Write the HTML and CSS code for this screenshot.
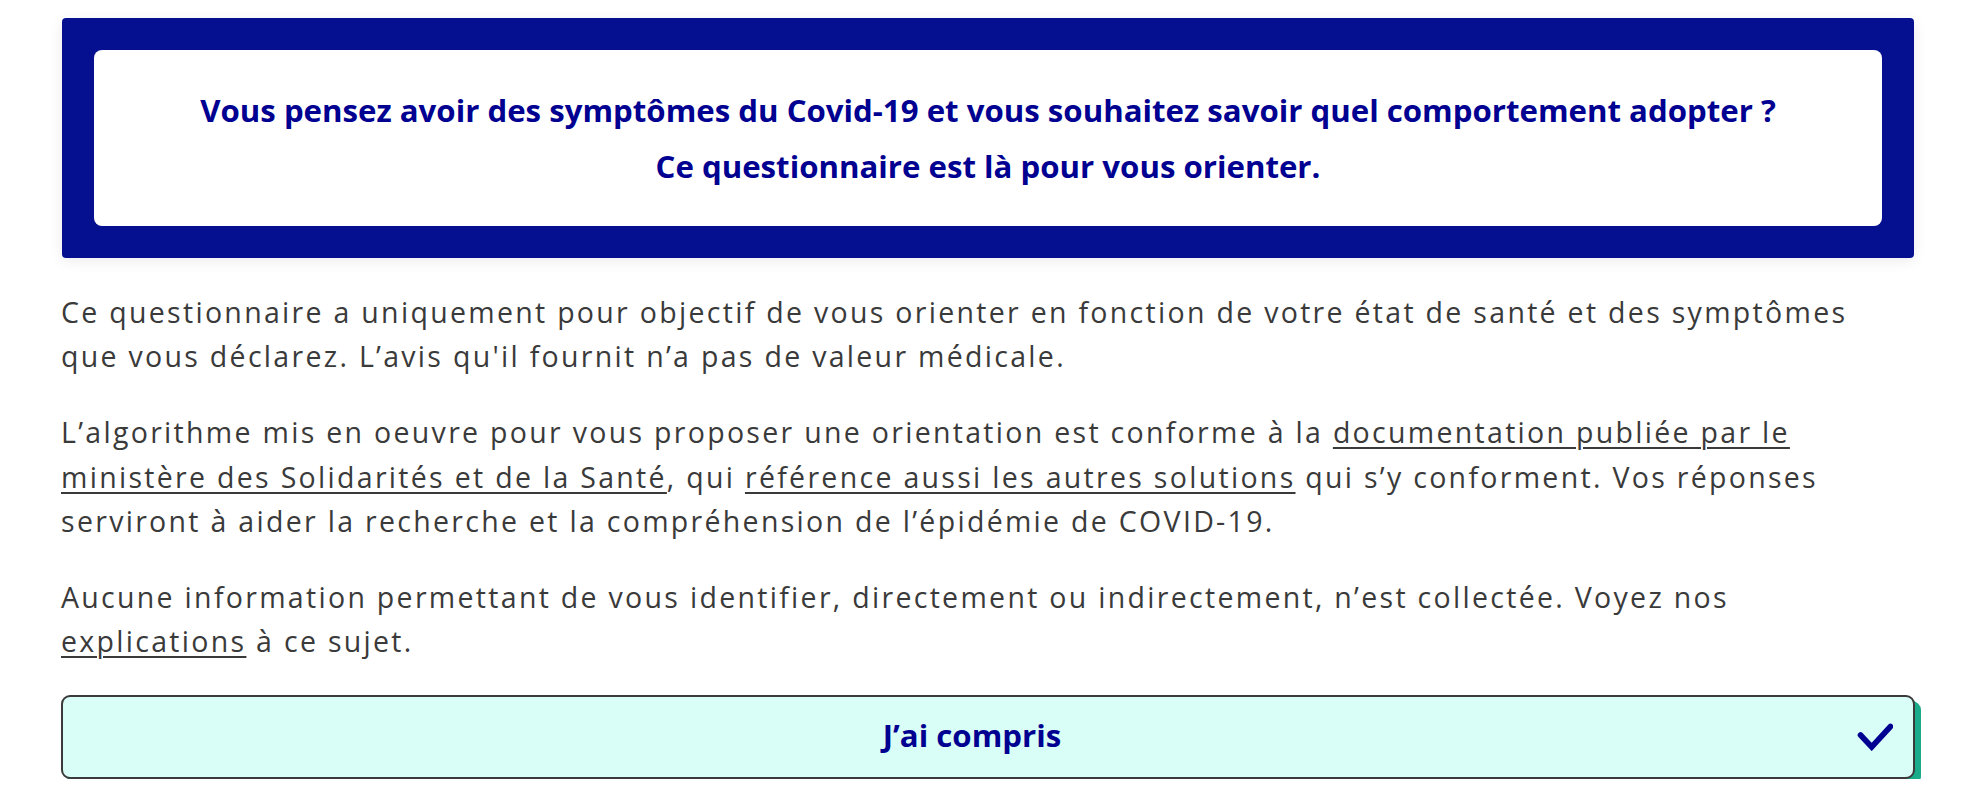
FILE: index.html
```html
<!DOCTYPE html>
<html lang="fr">
<head>
<meta charset="utf-8">
<title>Mes conseils Covid</title>
<link rel="stylesheet" href="styles.css">
</head>
<body>
<main class="page">
  <section class="intro">
    <div class="intro-inner">
      <p class="intro-title">Vous pensez avoir des symptômes du Covid-19 et vous souhaitez savoir quel comportement adopter ?</p>
      <p class="intro-title">Ce questionnaire est là pour vous orienter.</p>
    </div>
  </section>

  <div class="text">
    <p>Ce questionnaire a uniquement pour objectif de vous orienter en fonction de votre état de santé et des symptômes que vous déclarez. L’avis qu'il fournit n’a pas de valeur médicale.</p>
    <p>L’algorithme mis en oeuvre pour vous proposer une orientation est conforme à la <a href="#">documentation publiée par le ministère des Solidarités et de la Santé</a>, qui <a href="#">référence aussi les autres solutions</a> qui s’y conforment. Vos réponses serviront à aider la recherche et la compréhension de l’épidémie de COVID-19.</p>
    <p>Aucune information permettant de vous identifier, directement ou indirectement, n’est collectée. Voyez nos <a href="#">explications</a> à ce sujet.</p>
  </div>

  <button class="btn" type="button">
    <span class="btn-label">J’ai compris</span>
    <svg class="btn-check" width="36" height="28" viewBox="0 0 36 28" aria-hidden="true">
      <polyline points="3.5,12 14.7,24 33.5,3.5" fill="none" stroke="#000091" stroke-width="5.6" stroke-linecap="round" stroke-linejoin="miter" stroke-miterlimit="4"/>
    </svg>
  </button>
</main>
</body>
</html>
```
FILE: styles.css
```css
* { box-sizing: border-box; }

html, body {
  margin: 0;
  padding: 0;
  background: #ffffff;
}

body {
  font-family: "Open Sans", "Noto Sans", sans-serif;
  color: #3a3a3a;
}

.page {
  padding: 18px 61px 0 61px;
}

.intro {
  margin: 0 1px;
  background: #04108f;
  border-radius: 4px;
  padding: 32px;
  box-shadow: 0 3px 14px rgba(0, 0, 0, 0.08);
}

.intro-inner {
  background: #ffffff;
  border-radius: 8px;
  padding: 32px 24px;
  text-align: center;
}

.intro-title {
  margin: 0;
  font-weight: 700;
  font-size: 31.2px;
  line-height: 56px;
  color: #000091;
}

.text {
  padding-top: 32px;
}

.text p {
  margin: 0 0 32px 0;
  max-width: 1820px;
  font-size: 28.5px;
  line-height: 44.2px;
  letter-spacing: 2.3px;
}

.text a {
  color: #3a3a3a;
  text-decoration: underline;
  text-decoration-thickness: 1.5px;
  text-underline-offset: 4px;
}

.btn {
  display: flex;
  align-items: center;
  width: 100%;
  height: 84px;
  margin: 0;
  padding: 0 20px 4px 24px;
  background: #d9fef7;
  border: 2px solid #3a3a3a;
  border-radius: 9px;
  box-shadow: 6px 6px 0 0 #1aab8a;
  font-family: "Open Sans", "Noto Sans", sans-serif;
  cursor: pointer;
}

.btn-label {
  flex: 1;
  text-align: center;
  font-weight: 700;
  font-size: 31.2px;
  line-height: 40px;
  color: #000091;
}

.btn-check {
  display: block;
  flex: none;
  margin-top: 4px;
}
```
